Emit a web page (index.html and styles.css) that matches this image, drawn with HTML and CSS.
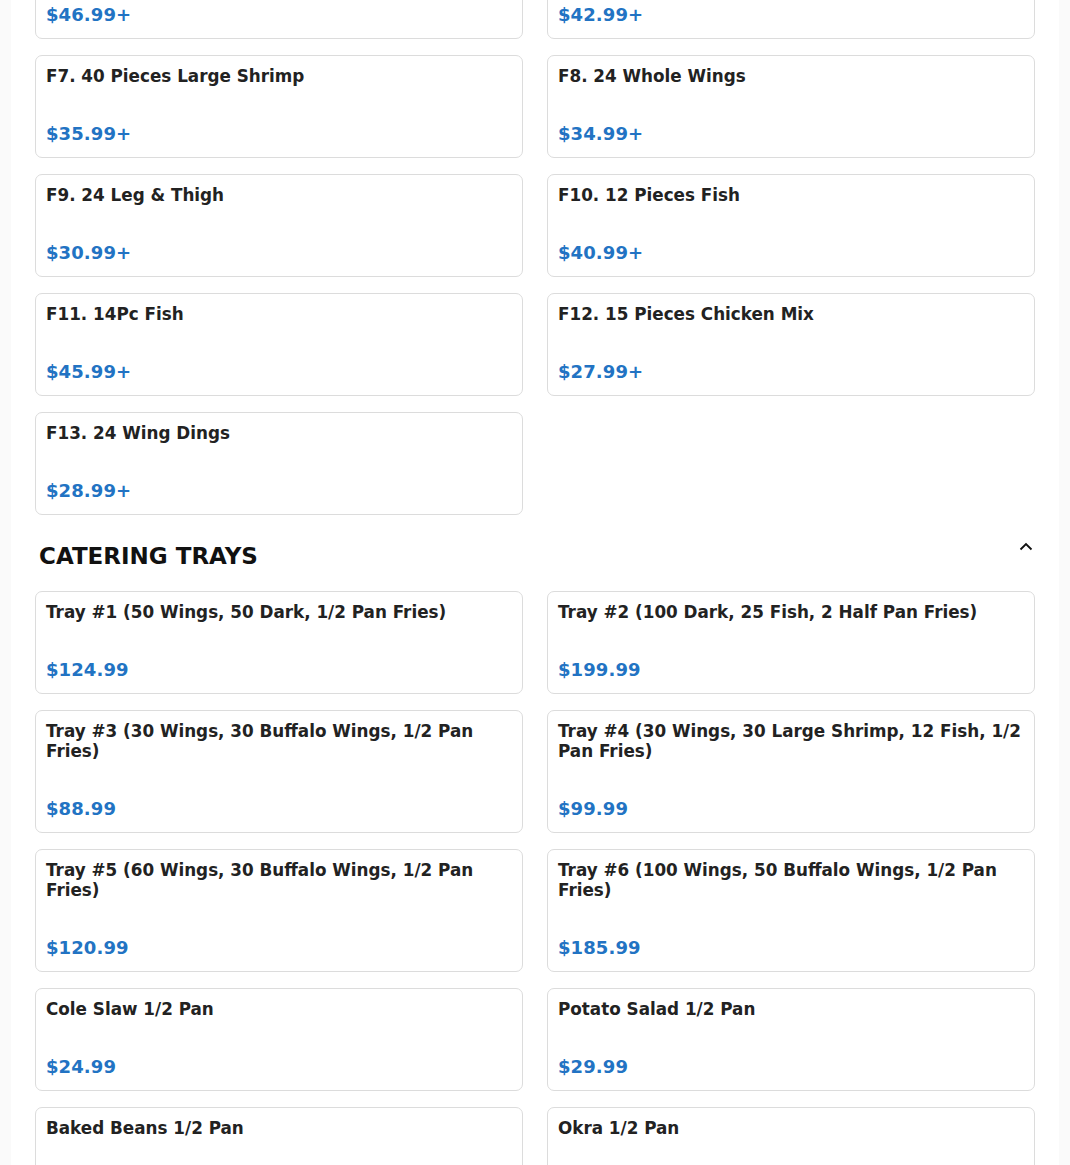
FILE: index.html
```html
<!DOCTYPE html>
<html>
<head>
<meta charset="utf-8">
<link rel="stylesheet" href="styles.css">
</head>
<body>
<div class="page">
  <div class="grid first">
    <div class="card"><div class="title">F5. 8 Pieces Fish &amp; 16 Wings</div><div class="price">$46.99+</div></div>
    <div class="card"><div class="title">F6. 30 Pieces Wings</div><div class="price">$42.99+</div></div>
    <div class="card"><div class="title">F7. 40 Pieces Large Shrimp</div><div class="price">$35.99+</div></div>
    <div class="card"><div class="title">F8. 24 Whole Wings</div><div class="price">$34.99+</div></div>
    <div class="card"><div class="title">F9. 24 Leg &amp; Thigh</div><div class="price">$30.99+</div></div>
    <div class="card"><div class="title">F10. 12 Pieces Fish</div><div class="price">$40.99+</div></div>
    <div class="card"><div class="title">F11. 14Pc Fish</div><div class="price">$45.99+</div></div>
    <div class="card"><div class="title">F12. 15 Pieces Chicken Mix</div><div class="price">$27.99+</div></div>
    <div class="card"><div class="title">F13. 24 Wing Dings</div><div class="price">$28.99+</div></div>
  </div>
  <div class="section-head">
    <h2>CATERING TRAYS</h2>
    <svg class="chev" width="14" height="14" viewBox="0 0 14 14"><path d="M1.5 9.5 L7 4 L12.5 9.5" fill="none" stroke="#111" stroke-width="1.8"/></svg>
  </div>
  <div class="grid">
    <div class="card"><div class="title">Tray #1 (50 Wings, 50 Dark, 1/2 Pan Fries)</div><div class="price">$124.99</div></div>
    <div class="card"><div class="title">Tray #2 (100 Dark, 25 Fish, 2 Half Pan Fries)</div><div class="price">$199.99</div></div>
    <div class="card"><div class="title">Tray #3 (30 Wings, 30 Buffalo Wings, 1/2 Pan Fries)</div><div class="price">$88.99</div></div>
    <div class="card"><div class="title">Tray #4 (30 Wings, 30 Large Shrimp, 12 Fish, 1/2 Pan Fries)</div><div class="price">$99.99</div></div>
    <div class="card"><div class="title">Tray #5 (60 Wings, 30 Buffalo Wings, 1/2 Pan Fries)</div><div class="price">$120.99</div></div>
    <div class="card"><div class="title">Tray #6 (100 Wings, 50 Buffalo Wings, 1/2 Pan Fries)</div><div class="price">$185.99</div></div>
    <div class="card"><div class="title">Cole Slaw 1/2 Pan</div><div class="price">$24.99</div></div>
    <div class="card"><div class="title">Potato Salad 1/2 Pan</div><div class="price">$29.99</div></div>
    <div class="card"><div class="title">Baked Beans 1/2 Pan</div><div class="price">$19.99</div></div>
    <div class="card"><div class="title">Okra 1/2 Pan</div><div class="price">$24.99</div></div>
  </div>
</div>
</body>
</html>
```
FILE: styles.css
```css
html, body {
  margin: 0;
  padding: 0;
  background: #fafafa;
  font-family: "DejaVu Sans", sans-serif;
}
.page {
  box-sizing: content-box;
  width: 1000px;
  margin: 0 auto;
  background: #fff;
  padding: 0 24px 40px;
}
.grid {
  display: grid;
  grid-template-columns: 1fr 1fr;
  column-gap: 24px;
  row-gap: 16px;
}
.grid.first {
  margin-top: -64px;
}
.card {
  border: 1px solid #dcdcdc;
  border-radius: 7px;
  padding: 10px 10px 11px 10px;
  display: flex;
  flex-direction: column;
}
.title {
  font-size: 16.8px;
  line-height: 20.3px;
  font-weight: bold;
  color: #222;
  margin-bottom: 35.7px;
}
.price {
  font-size: 18px;
  line-height: 24px;
  font-weight: bold;
  letter-spacing: 0.1px;
  color: #2273c3;
}
.section-head {
  display: flex;
  justify-content: space-between;
  align-items: center;
  padding: 26px 2px 20px 4px;
}
.section-head h2 {
  margin: 0;
  font-size: 23px;
  line-height: 30px;
  font-weight: bold;
  color: #111;
}
.chev {
  margin-top: -18px;
}
```
